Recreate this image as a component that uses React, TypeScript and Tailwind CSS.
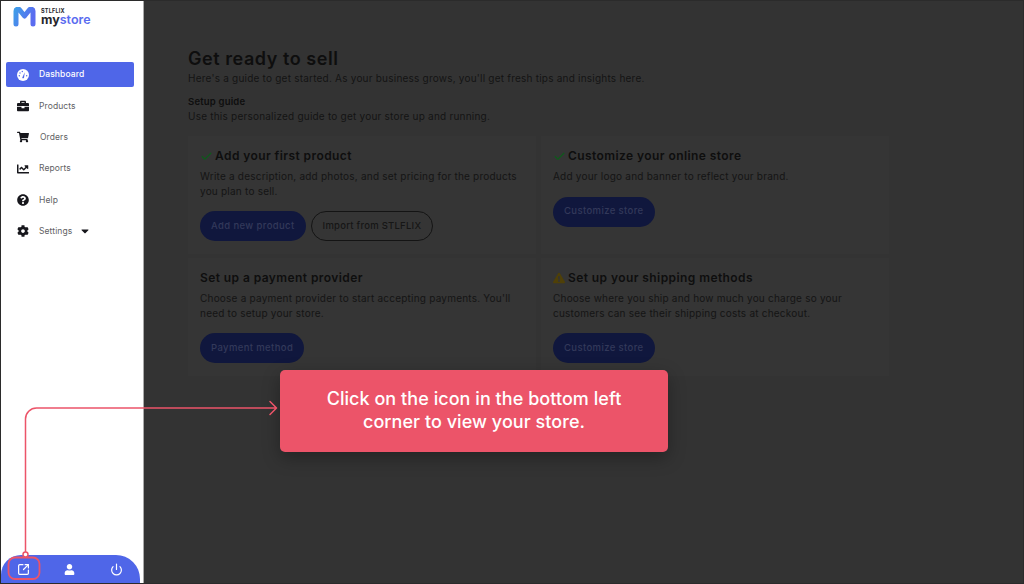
import { Check, Power, SquareArrowOutUpRight } from "lucide-react";
import {
  FaBriefcase,
  FaCaretDown,
  FaChartLine,
  FaCog,
  FaExclamationTriangle,
  FaQuestionCircle,
  FaShoppingCart,
  FaUser,
} from "react-icons/fa";
import type { ReactNode } from "react";

function GaugeIcon() {
  return (
    <svg width="12" height="12" viewBox="0 0 12 12">
      <circle cx="6" cy="6" r="6" fill="#ffffff" />
      <path d="M5.200 8.800 7.800 3.200 7 8.800a1 1 0 0 1-1.800 0Z" fill="#4f66e8" />
      <circle cx="3" cy="4" r="0.700" fill="#4f66e8" />
      <circle cx="5.300" cy="2.500" r="0.700" fill="#4f66e8" />
      <circle cx="2.300" cy="6.700" r="0.700" fill="#4f66e8" />
      <circle cx="9.700" cy="6.700" r="0.700" fill="#4f66e8" />
    </svg>
  );
}

const navItems = [
  { label: "Dashboard", icon: <GaugeIcon />, active: true },
  { label: "Products", icon: <FaBriefcase size={12} /> },
  { label: "Orders", icon: <FaShoppingCart size={12} />, shift: true },
  { label: "Reports", icon: <FaChartLine size={12} /> },
  { label: "Help", icon: <FaQuestionCircle size={12} /> },
  { label: "Settings", icon: <FaCog size={12} />, caret: true },
];

function Logo() {
  return (
    <div className="flex items-start gap-[5px] pl-[12px] pt-[6px] h-[28px] box-content">
      <svg width="23" height="20" viewBox="0 0 23 20">
        <defs>
          <linearGradient id="logoM" x1="0" y1="0" x2="1" y2="0.4">
            <stop offset="0" stopColor="#3f9be8" />
            <stop offset="1" stopColor="#5a6cf0" />
          </linearGradient>
        </defs>
        <path
          d="M3 17V4c0-2 2.500-2.500 3.700-1L11.500 9l4.800-6c1.200-1.500 3.700-1 3.700 1v13"
          fill="none"
          stroke="url(#logoM)"
          strokeWidth="5"
          strokeLinecap="round"
          strokeLinejoin="round"
        />
      </svg>
      <div className="flex flex-col mt-[2px] font-['Inter',sans-serif] font-bold text-[#26262c]">
        <span className="text-[5.500px] leading-[5px] tracking-[0.2px]">STLFLIX</span>
        <span className="text-[12.500px] leading-[12px]">
          my<span className="text-[#5a6cf0] font-semibold">store</span>
        </span>
      </div>
    </div>
  );
}

function Sidebar() {
  return (
    <aside className="w-[143px] h-full bg-white flex flex-col shrink-0 border-r border-[#aaaaaa]">
      <Logo />
      <nav className="mt-[27px] flex flex-col gap-[6.400px] pl-[5px] pr-[9px]">
        {navItems.map((item) => (
          <div
            key={item.label}
            className={`h-[25px] flex items-center pl-[11px] rounded-[2px] text-[8.500px] tracking-[0.1px] ${
              item.active ? "bg-[#4f66e8] text-white font-medium" : "text-[#5f5f65]"
            }`}
          >
            <span className={`w-[22px] ${item.active ? "text-white" : "text-[#17171c]"}`}>
              {item.icon}
            </span>
            <span className={item.shift ? "ml-px" : ""}>{item.label}</span>
            {item.caret && <FaCaretDown size={12} className="ml-[7px] text-[#17171c]" />}
          </div>
        ))}
      </nav>
      <div className="mt-auto w-[139px] h-[28px] bg-[#4f66e8] rounded-tl-[20px] rounded-tr-[24px] flex items-center text-white">
        <span className="w-[45px] flex justify-center">
          <SquareArrowOutUpRight size={13} strokeWidth={2.200} />
        </span>
        <span className="w-[47px] flex justify-center">
          <FaUser size={11} />
        </span>
        <span className="w-[47px] flex justify-center">
          <Power size={13} strokeWidth={2.200} />
        </span>
      </div>
    </aside>
  );
}

function Pill({ children, outline }: { children: ReactNode; outline?: boolean }) {
  return (
    <span
      className={`h-[30px] px-[11px] rounded-full flex items-center text-[9.500px] font-medium whitespace-nowrap ${
        outline
          ? "border border-[#141414] text-[#161616] tracking-[0.25px]"
          : "bg-[#10173d] text-[#33395a] tracking-[0.38px]"
      }`}
    >
      {children}
    </span>
  );
}

function Card({
  icon,
  title,
  lines,
  children,
}: {
  icon?: ReactNode;
  title: string;
  lines: string[];
  children: ReactNode;
}) {
  return (
    <div className="bg-[#353535] pl-[12px] pt-[10px] h-[118px]">
      <div className="flex items-center gap-[2px] text-[#0e0e0e] text-[12px] font-semibold tracking-[0.42px] h-[18px] mt-[1px]">
        {icon}
        {title}
      </div>
      <div className="mt-[4px] text-[#141414] text-[10px] leading-[14.500px] tracking-[0.22px]">
        {lines.map((line) => (
          <div key={line}>{line}</div>
        ))}
      </div>
      <div className="flex gap-[5px] mt-[13px]">{children}</div>
    </div>
  );
}

function Main() {
  return (
    <main className="flex-1 pl-[44px] pt-[46px] bg-[#333333] font-['Inter',sans-serif]">
      <h1 className="text-[#0e0e0e] text-[18px] leading-[24px] font-semibold tracking-[0.55px]">
        Get ready to sell
      </h1>
      <p className="text-[#141414] text-[10px] leading-[14px] tracking-[0.22px]">
        Here's a guide to get started. As your business grows, you'll get fresh tips and insights here.
      </p>
      <p className="mt-[10px] text-[#0e0e0e] text-[9.500px] leading-[14px] font-semibold tracking-[0.2px]">
        Setup guide
      </p>
      <p className="text-[#141414] text-[10px] leading-[14px] tracking-[0.22px]">
        Use this personalized guide to get your store up and running.
      </p>
      <div className="mt-[13px] w-[701px] grid grid-cols-2 gap-x-[5px] gap-y-[4px]">
        <Card
          icon={<Check size={13} strokeWidth={2.200} className="text-[#0f5a1c]" />}
          title="Add your first product"
          lines={[
            "Write a description, add photos, and set pricing for the products",
            "you plan to sell.",
          ]}
        >
          <Pill>Add new product</Pill>
          <Pill outline>Import from STLFLIX</Pill>
        </Card>
        <Card
          icon={<Check size={13} strokeWidth={2.200} className="text-[#0f5a1c]" />}
          title="Customize your online store"
          lines={["Add your logo and banner to reflect your brand."]}
        >
          <Pill>Customize store</Pill>
        </Card>
        <Card
          title="Set up a payment provider"
          lines={[
            "Choose a payment provider to start accepting payments. You'll",
            "need to setup your store.",
          ]}
        >
          <Pill>Payment method</Pill>
        </Card>
        <Card
          icon={<FaExclamationTriangle size={12} className="text-[#4f4008] mr-[1px]" />}
          title="Set up your shipping methods"
          lines={[
            "Choose where you ship and how much you charge so your",
            "customers can see their shipping costs at checkout.",
          ]}
        >
          <Pill>Customize store</Pill>
        </Card>
      </div>
    </main>
  );
}

export default function App() {
  return (
    <div className="relative w-[1024px] h-[584px] overflow-hidden bg-[#333333] border border-[#2b2b2b] flex font-['Inter',sans-serif]">
      <Sidebar />
      <Main />

      {/* tour callout on top of the dimmed page */}
      <div className="absolute left-[279px] top-[369px] w-[388px] h-[82px] pb-[3px] rounded-[5px] bg-[#ec5469] shadow-[0_6px_18px_rgba(0,0,0,0.3)] flex items-center justify-center text-center text-white text-[18px] leading-[23px] font-medium tracking-[0.05px]">
        <div>
          Click on the icon in the bottom left
          <br />
          corner to view your store.
        </div>
      </div>

      <svg className="absolute left-[-1px] top-[-1px]" width="300" height="584" viewBox="0 0 300 584" fill="none">
        <path
          d="M25.500 552V419a11 11 0 0 1 11-11H276M270 401.500l6.500 6.500-6.500 6.500"
          stroke="#ec5469"
          strokeWidth="1.500"
          strokeLinecap="round"
          strokeLinejoin="round"
        />
        <rect x="8.500" y="557.500" width="31" height="21.500" rx="6.500" stroke="#ec5469" strokeWidth="1.800" />
        <circle cx="25.500" cy="554.500" r="2.500" fill="#ffffff" stroke="#ec5469" strokeWidth="1.500" />
      </svg>
    </div>
  );
}
